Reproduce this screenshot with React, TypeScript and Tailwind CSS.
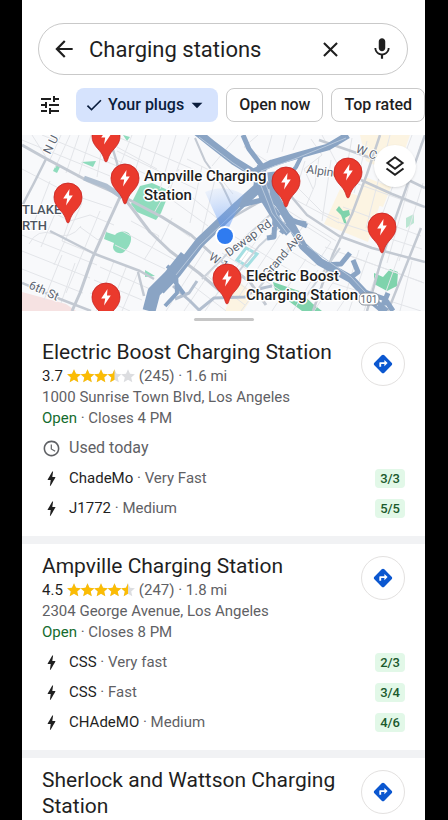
import { useState } from "react";
import {
  MdArrowBack,
  MdArrowDropDown,
  MdBolt,
  MdCheck,
  MdClose,
  MdDirections,
  MdMic,
  MdSchedule,
  MdTune,
} from "react-icons/md";

type Plug = { name: string; speed: string; free: string };

type Station = {
  name: string;
  rating: number;
  reviews: number;
  distance: string;
  address: string;
  closes: string;
  usedToday?: boolean;
  plugs: Plug[];
};

const stations: Station[] = [
  {
    name: "Electric Boost Charging Station",
    rating: 3.7,
    reviews: 245,
    distance: "1.6 mi",
    address: "1000 Sunrise Town Blvd, Los Angeles",
    closes: "Closes 4 PM",
    usedToday: true,
    plugs: [
      { name: "ChadeMo", speed: "Very Fast", free: "3/3" },
      { name: "J1772", speed: "Medium", free: "5/5" },
    ],
  },
  {
    name: "Ampville Charging Station",
    rating: 4.5,
    reviews: 247,
    distance: "1.8 mi",
    address: "2304 George Avenue, Los Angeles",
    closes: "Closes 8 PM",
    plugs: [
      { name: "CSS", speed: "Very fast", free: "2/3" },
      { name: "CSS", speed: "Fast", free: "3/4" },
      { name: "CHAdeMO", speed: "Medium", free: "4/6" },
    ],
  },
];

const pins = [
  [84, 1],
  [103, 43],
  [46, 62],
  [84, 162],
  [264, 46],
  [326, 37],
  [360, 92],
  [205, 143],
];

const STAR = "M7 .3l2 4.500 4.900.4-3.700 3.200 1.100 4.800L7 10.700l-4.300 2.500 1.100-4.800L.1 5.200 5 4.800z";

const Stars = ({ rating }: { rating: number }) => (
  <svg width="68" height="14" viewBox="0 0 68 14" role="img" aria-label={`${rating} stars`}>
    {[0, 1, 2, 3, 4].map((i) => {
      const fill = Math.min(1, Math.max(0, Math.round((rating - i) * 2) / 2));
      return (
        <svg key={i} x={i * 13.5} width="14" height="14" viewBox="0 0 14 14">
          <path d={STAR} fill="#dcdde0" />
          <svg width={14 * fill} height="14">
            <path d={STAR} fill="#fbbc04" />
          </svg>
        </svg>
      );
    })}
  </svg>
);

const LayersIcon = () => (
  <svg width="24" height="24" viewBox="0 0 24 24" fill="none" stroke="currentColor" strokeWidth="2">
    <path d="M12 3.200l7.600 5.800-7.600 5.800L4.400 9z" />
    <path d="M3.500 14.500l8.500 6.300 8.500-6.300" />
  </svg>
);

const StationMap = () => (
  <svg
    className="block w-full font-[Roboto,sans-serif]"
    viewBox="0 0 403 176"
    preserveAspectRatio="xMidYMid slice"
    role="img"
    aria-label="Map of charging stations"
  >
    <defs>
      <radialGradient id="beam" gradientUnits="userSpaceOnUse" cx="203" cy="101" r="48">
        <stop offset="0" stopColor="#4285f4" stopOpacity=".6" />
        <stop offset="1" stopColor="#8ab4f8" stopOpacity=".12" />
      </radialGradient>
    </defs>
    <rect width="403" height="176" fill="#f8f9fb" />

    {/* shopping blocks */}
    <g fill="#fcf4e2">
      <path d="M338 0h50l-14 40-30-14zM318 54l40 15-12 38-44-18zM343 42l26 10-8 20-26-9zM215 145l18 14-12 17h-18z" />
    </g>
    <path d="M0 157l44 12 10 7H0z" fill="#f6e2e2" />

    {/* parks */}
    <g fill="#8fdcbd">
      <path d="M118 51l12-3 18 8-9 22-5 7-19-8-6-8z" />
      <path d="M59 27l15-1-3 6zM34 30l4 2-3 6-4-2zM101 0l7 2-3 4zM123 135l10 6-10 1z" />
      <path d="M84 97l9 3c3-4 14-6 16 2 1 7-5 13-7 15-4 3-11 0-11-5l1-4-10-4z" />
    </g>
    <g fill="#7fd3ac">
      <path d="M251 147l26 9 14 13 9 7h-20l-12-9-15-12z" />
      <path d="M352 138l9 4 7-8 8 3-1 14-10 5-13-7zM317 71l4 5 6-1 1 5-5 3 2 6-3-1-3-8-5-5z" />
      <path d="M384 83l8-4v9l-8 5z" opacity=".5" />
    </g>
    <path d="M215 125l9-12 11 6-10 12z" fill="#fff" stroke="#a5dfe2" strokeWidth="3" />

    {/* minor streets */}
    <g fill="none" stroke="#e3e5e9" strokeWidth="1">
      <path d="M10 0l14 22M39 0l-12 27M48 0L33 33M57 0L44 38M69 0L56 43M82 0l-7 42M0 5l88 36M20 0l75 31M95 12l40 22M88 22l50 24M110 0l-15 38M124 0l-12 40M139 0l-15 47M154 0l-16 54M167 2l-21 58M98 3l75 32M95 16l79 38M0 34l48 25 42 14M28 46L9 95M43 55l-24 57M60 68L32 130M78 76l-34 82M0 100l75 30M0 116l68 27M0 134l61 24M40 120l-18 45M53 128l-14 40M30 77l18 9 20-6 24 10M58 92l18 13 9-9M47 86l-7 20 32 13M109 86l28 15-15 24M100 96l53 29M93 110l50 24M78 132l50 22M72 145l48 20M68 158l40 18M92 126l-18 50M105 130l-18 46M117 135l-17 41M7 109q8-16 25-10t27-8" />
      <path d="M161 55l35 29M146 62l40 29M137 80l31 22M150 83l-12 25M132 78l25-44M180 31l-12 57M194 40l-14 58M165 24l30 15 16 20M190 31l26-31" />
      <path d="M236 0l-14 12 23 14M250 0l-5 18M264 0l-4 17M278 0l-7 15M289 4l11 16-18 14 9 20M300 0l20 38M283 26l-8 26 25 25 17 7M297 22l-4 28-9 21M309 25l-9 61M272 64l45 24M265 75l49 31M282 90l27 17-16 24-28-17z" />
      <path d="M330 3l-5 28M345 6l-13 52M368 0l-24 93M390 0l-36 96M325 45l75 27M321 72l78 29M316 87l84 27M303 112l97 35M399 8l-34 120M401 48l-24 78M326 120l76 28M311 148l88 28M337 115l-14 46M347 117l-20 59M361 119l-19 57M377 120l-20 56M390 126l-12 50" />
      <path d="M210 100l66 40M200 118l62 40M193 130l41 31M184 140l39 30M170 150l34 26M185 112l-41 64M197 124l-35 52M212 134l-29 42M245 91l-52 71M258 100l-42 63M270 107l-51 69M284 124l-34 52M296 135l-25 41M312 146l-20 30M328 157l-13 19" />
    </g>
    {/* main streets */}
    <g fill="none" stroke="#c3c9d2" strokeLinejoin="round">
      <path d="M0 10l23 13 43 23 32 14 42 22 29 18 21 19 38 28 16 23" strokeWidth="3" />
      <path d="M98 62l-11 24-17 38-12 34-8 18" strokeWidth="3" />
      <path d="M103 64l25 33 20 19 29 22 21 18" strokeWidth="3" />
      <path d="M28 96l45 23 45 17 14 8" strokeWidth="2.500" />
      <path d="M24 24L12 48 0 71M89 8l6 20 8 34M116 137l6 24M0 148l38 16 31 12" strokeWidth="2.500" />
      <path d="M250 151q-18 3-27 11l-31 1-16 13M151 151l17 15 10 10M153 164l14-6 8-12" strokeWidth="3" stroke="#b3bfcf" />
      <path d="M173 3l10 23 17 24 11 23" strokeWidth="2" />
      <path d="M268 60l17 20 32 21 33 12 53 14M297 5l55 19 24 16 27 13M339 45l31 14 33 13" strokeWidth="2.500" />
      <path d="M358 0l-13 39-15 40-19 40-20 57M403 0l-27 76-17 50-14 50M399 93l-33 83" strokeWidth="2.500" />
      <path d="M180 144l28-28 52-47M202 155l35-44 26-24M233 158l39-49M281 166l37-53" strokeWidth="2" stroke="#cdd3db" />
      <path d="M206 85l38-22 20 10" strokeWidth="2.500" />
    </g>
    <path d="M62 43l22 8 16 11" stroke="#b0bfd0" strokeWidth="5" fill="none" />

    {/* freeways */}
    <g fill="none" stroke="#8aa4c4" strokeLinejoin="round">
      <path d="M175-3l15 12 22 17 23 14 12 14" strokeWidth="8" />
      <path d="M221 0l6 14 13 17" strokeWidth="5" />
      <path d="M326 0l-20 12-32 9-24 7-20 10" strokeWidth="7" />
      <path d="M281 18l-7 14-14 18-10 12" strokeWidth="4" />
      <path d="M240 31l-4 22-20 18-38 36-23 30-17 18" strokeWidth="10" />
      <path d="M164 121l-16 20-16 16-5 19" strokeWidth="13" />
      <path d="M232 36l9 26 16 26 10 10" strokeWidth="8" />
      <path d="M249 37l3 23 15 26 14 25 17 16 31 17 16 17 19 16" strokeWidth="8" />
      <path d="M239 43l14 38-1 21-7 1M249 63l21 22 15 6M259 98l10-12 15 3M219 70l25-6 13 17" strokeWidth="5" />
      <path d="M302 130l17-1 9-11M328 143l8-6-5-12M340 156l23 8 8 12M366 158l-5 12" strokeWidth="5" />
      <path d="M145 131l9 7 1 20-12 13M151 144l11 15" strokeWidth="4" />
    </g>
    <g fill="none" stroke="#b7c8dc" strokeWidth="1">
      <path d="M177 2l34 26 23 15M324 3l-49 20-36 13M236 43l14 35 15 20M241 41l14 39 25 30M218 72l-40 38-24 30M285 111l44 31 27 29" />
    </g>

    {/* street names */}
    <g fill="#5d6673" stroke="#fff" strokeWidth="2" paintOrder="stroke" fontSize="12">
      <text transform="translate(28 20) rotate(-63)">N U</text>
      <text transform="translate(6 153) rotate(24)">6th St</text>
      <text transform="translate(186 124) rotate(32)">W 1</text>
      <text transform="translate(207 122) rotate(-36)">Dewap Rd</text>
      <text transform="translate(246 143) rotate(-49)">Grand Ave</text>
      <text transform="translate(284 38) rotate(8)">Alpine</text>
      <text transform="translate(333 17) rotate(21)">W Ce</text>
    </g>
    <g fill="#4d5560" stroke="#fff" strokeWidth="2" paintOrder="stroke" fontSize="13" fontWeight="500">
      <text x="0" y="79">TLAKE</text>
      <text x="0" y="95">RTH</text>
    </g>
    <rect x="337" y="158" width="20" height="12" rx="5" fill="#fff" stroke="#8b929c" />
    <text x="347" y="168" textAnchor="middle" fontSize="10" fill="#5d6673">101</text>

    {/* current location */}
    <path d="M203 101l-20-44q20-9 39 3z" fill="url(#beam)" />
    <circle cx="203" cy="101" r="10" fill="#fff" />
    <circle cx="203" cy="101" r="8" fill="#2f7bf0" />

    {pins.map(([x, y]) => (
      <g key={`${x}-${y}`} transform={`translate(${x} ${y})`}>
        <path
          d="M0 26c-1.400 0-1.800-3.500-3.500-7C-6.500 13-14 9.500-14 0a14 14 0 0 1 28 0C14 9.500 6.500 13 3.500 19 1.800 22.500 1.400 26 0 26z"
          fill="#ea3a2d"
          stroke="#c5221f"
          strokeWidth=".8"
        />
        <path d="M1.500-8L-4.800 1.500h4L-2 8.500 4.800-1.500H1z" fill="#fff" />
      </g>
    ))}

    <g fill="#1f1f1f" stroke="#fff" strokeWidth="3" strokeLinejoin="round" paintOrder="stroke" fontSize="15" fontWeight="500">
      <text x="122" y="46">Ampville Charging</text>
      <text x="122" y="65">Station</text>
      <text x="224" y="146">Electric Boost</text>
      <text x="224" y="165">Charging Station</text>
    </g>
  </svg>
);

const DirectionsButton = ({ name }: { name: string }) => (
  <button
    aria-label={`Directions to ${name}`}
    className="mt-[3px] flex size-11 shrink-0 items-center justify-center rounded-full border border-[#e3e1e0] text-[#0b57d0]"
  >
    <MdDirections size={22} />
  </button>
);

const StationCard = ({ station }: { station: Station }) => (
  <article className="border-b-8 border-[#f1f2f4] px-5 pt-[9px] pb-[13px]">
    <div className="flex items-start justify-between gap-3">
      <div>
        <h2 className="text-[21px] leading-[26px] text-[#1f1f1f]">{station.name}</h2>
        <p className="flex items-center leading-[22px]">
          <span className="mr-1 text-[#1f1f1f]">{station.rating}</span>
          <Stars rating={station.rating} />
          <span className="ml-1">
            ({station.reviews}) · {station.distance}
          </span>
        </p>
        <p className="leading-[21px]">{station.address}</p>
        <p className="leading-[21px]">
          <span className="text-[#146c2e]">Open</span> · {station.closes}
        </p>
      </div>
      <DirectionsButton name={station.name} />
    </div>
    <ul className="mt-1">
      {station.usedToday && (
        <li className="flex h-[30px] items-center gap-2 text-base">
          <MdSchedule size={19} />
          Used today
        </li>
      )}
      {station.plugs.map((plug) => (
        <li key={plug.name + plug.speed} className="flex h-[30px] items-center gap-2">
          <MdBolt size={19} className="text-[#1f1f1f]" />
          <span className="flex-1">
            <span className="text-[#1f1f1f]">{plug.name}</span> · {plug.speed}
          </span>
          <span className="rounded bg-[#e2f8e8] px-[5px] text-[13px] font-medium leading-[19px] text-[#1b5a2d]">
            {plug.free}
          </span>
        </li>
      ))}
    </ul>
  </article>
);

const App = () => {
  const [query, setQuery] = useState("Charging stations");

  return (
    <div className="h-screen bg-black pr-[23px] pl-[22px] font-[Roboto,sans-serif] text-[15px] text-[#5f6165]">
      <main className="flex h-full flex-col overflow-hidden bg-white">
        <header className="shrink-0 pt-[23px] pb-[13px]">
          <form
            className="mr-[17px] ml-4 flex h-[52px] items-center rounded-full border border-[#c9c9c9] px-3 text-[#1f1f1f]"
            onSubmit={(e) => e.preventDefault()}
          >
            <button type="button" aria-label="Back">
              <MdArrowBack size={26} />
            </button>
            <input
              aria-label="Search"
              className="ml-3 min-w-0 flex-1 text-[22px] outline-none"
              value={query}
              onChange={(e) => setQuery(e.target.value)}
            />
            <button type="button" aria-label="Clear" onClick={() => setQuery("")}>
              <MdClose size={25} />
            </button>
            <button type="button" aria-label="Voice search" className="ml-[26px]">
              <MdMic size={26} />
            </button>
          </form>
          <div className="mt-[13px] flex items-center overflow-hidden pl-4 text-base font-medium whitespace-nowrap text-[#1f1f1f]">
            <button aria-label="All filters" className="mr-[14px] shrink-0">
              <MdTune size={24} />
            </button>
            <button
              aria-haspopup="menu"
              className="mr-2 flex h-[34px] shrink-0 items-center rounded-lg bg-[#d6e3fd] px-2 text-[#0a1d3d]"
            >
              <MdCheck size={20} className="mr-1" />
              Your plugs
              <MdArrowDropDown size={26} />
            </button>
            <button className="mr-2 h-[34px] shrink-0 rounded-lg border border-[#c9c9c9] px-3">Open now</button>
            <button className="h-[34px] shrink-0 rounded-lg border border-[#c9c9c9] px-3">Top rated</button>
          </div>
        </header>

        <section className="relative shrink-0">
          <StationMap />
          <button
            aria-label="Map layers"
            className="absolute top-[10px] right-[9px] flex size-[42px] items-center justify-center rounded-full bg-white text-[#1f1f1f] shadow"
          >
            <LayersIcon />
          </button>
        </section>

        <div className="flex h-[19px] shrink-0 justify-center pt-[7px]">
          <div className="h-[3px] w-[60px] rounded-full bg-[#c6c6c6]" />
        </div>

        <section className="min-h-0 flex-1 overflow-y-auto [scrollbar-width:none]">
          {stations.map((s) => (
            <StationCard key={s.name} station={s} />
          ))}
          <article className="flex items-start justify-between gap-3 px-5 pt-[9px]">
            <h2 className="text-[21px] leading-[26px] text-[#1f1f1f]">Sherlock and Wattson Charging Station</h2>
            <DirectionsButton name="Sherlock and Wattson Charging Station" />
          </article>
        </section>
      </main>
    </div>
  );
};

export default App;
